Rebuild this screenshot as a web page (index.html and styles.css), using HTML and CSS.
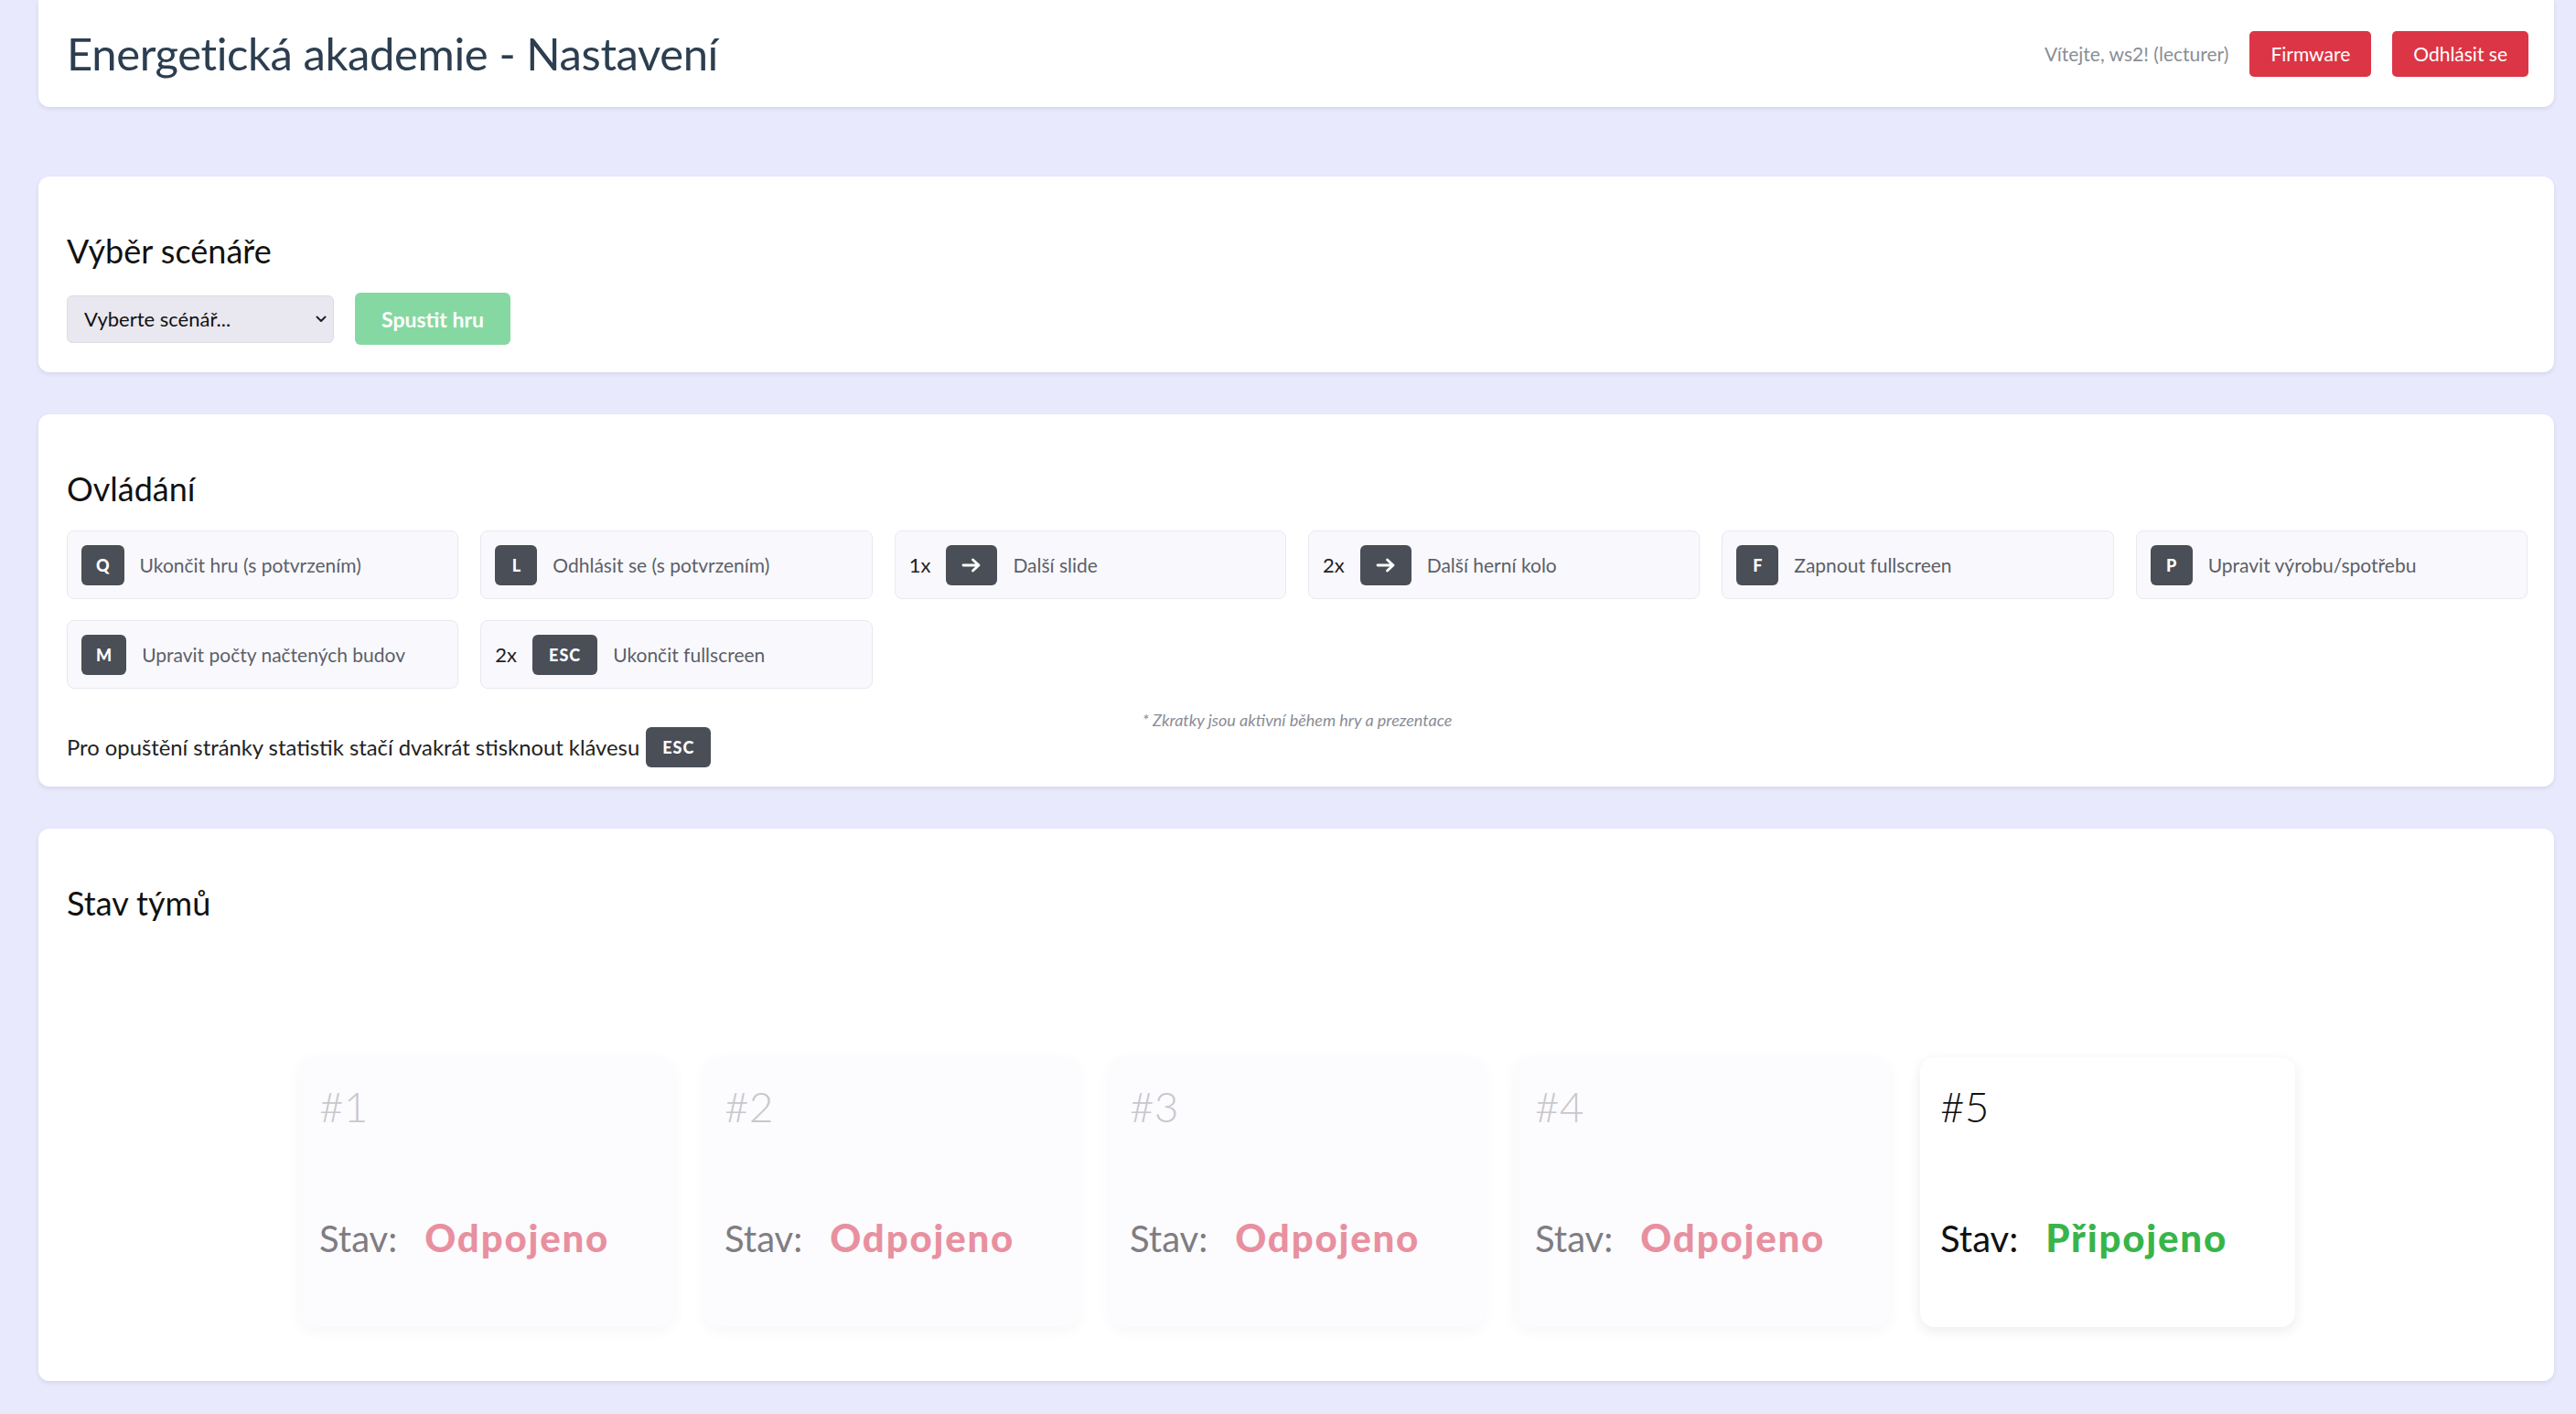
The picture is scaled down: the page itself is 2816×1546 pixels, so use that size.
FILE: index.html
```html
<!DOCTYPE html>
<html lang="cs">
<head>
<meta charset="utf-8">
<title>Energetická akademie - Nastavení</title>
<link rel="stylesheet" href="styles.css">
</head>
<body>
<div class="page">
  <header class="topbar">
    <h1 class="app-title">Energetická akademie - Nastavení</h1>
    <div class="user-box">
      <span class="welcome">Vítejte, ws2! (lecturer)</span>
      <button class="btn btn-danger">Firmware</button>
      <button class="btn btn-danger">Odhlásit se</button>
    </div>
  </header>

  <section class="card">
    <h2 class="card-title">Výběr scénáře</h2>
    <div class="scenario-row">
      <div class="select-wrap">
        <select class="scenario-select">
          <option>Vyberte scénář...</option>
        </select>
        <svg class="select-chevron" width="12" height="8" viewBox="0 0 12 8"><polyline points="1.5,1.5 6,6 10.5,1.5" fill="none" stroke="#222" stroke-width="2" stroke-linecap="round" stroke-linejoin="round"/></svg>
      </div>
      <button class="btn btn-start" disabled>Spustit hru</button>
    </div>
  </section>

  <section class="card card-controls">
    <h2 class="card-title">Ovládání</h2>
    <div class="shortcut-grid">
      <div class="shortcut"><kbd class="key">Q</kbd><span class="desc">Ukončit hru (s potvrzením)</span></div>
      <div class="shortcut"><kbd class="key">L</kbd><span class="desc">Odhlásit se (s potvrzením)</span></div>
      <div class="shortcut"><span class="count">1x</span><kbd class="key key-arrow"><svg width="22" height="16" viewBox="0 0 22 16"><path d="M2 8H19M12.5 2L19 8L12.5 14" fill="none" stroke="#fff" stroke-width="2.8" stroke-linecap="round" stroke-linejoin="round"/></svg></kbd><span class="desc">Další slide</span></div>
      <div class="shortcut"><span class="count">2x</span><kbd class="key key-arrow"><svg width="22" height="16" viewBox="0 0 22 16"><path d="M2 8H19M12.5 2L19 8L12.5 14" fill="none" stroke="#fff" stroke-width="2.8" stroke-linecap="round" stroke-linejoin="round"/></svg></kbd><span class="desc">Další herní kolo</span></div>
      <div class="shortcut"><kbd class="key">F</kbd><span class="desc">Zapnout fullscreen</span></div>
      <div class="shortcut"><kbd class="key">P</kbd><span class="desc">Upravit výrobu/spotřebu</span></div>
      <div class="shortcut"><kbd class="key">M</kbd><span class="desc">Upravit počty načtených budov</span></div>
      <div class="shortcut"><span class="count">2x</span><kbd class="key key-wide">ESC</kbd><span class="desc">Ukončit fullscreen</span></div>
    </div>
    <p class="footnote">* Zkratky jsou aktivní během hry a prezentace</p>
    <p class="exit-hint"><span>Pro opuštění stránky statistik stačí dvakrát stisknout klávesu</span><kbd class="key key-wide">ESC</kbd></p>
  </section>

  <section class="card card-teams">
    <h2 class="card-title">Stav týmů</h2>
    <div class="teams">
      <div class="team offline">
        <div class="team-no">#1</div>
        <div class="team-status"><span class="label">Stav:</span><span class="state">Odpojeno</span></div>
      </div>
      <div class="team offline">
        <div class="team-no">#2</div>
        <div class="team-status"><span class="label">Stav:</span><span class="state">Odpojeno</span></div>
      </div>
      <div class="team offline">
        <div class="team-no">#3</div>
        <div class="team-status"><span class="label">Stav:</span><span class="state">Odpojeno</span></div>
      </div>
      <div class="team offline">
        <div class="team-no">#4</div>
        <div class="team-status"><span class="label">Stav:</span><span class="state">Odpojeno</span></div>
      </div>
      <div class="team online">
        <div class="team-no">#5</div>
        <div class="team-status"><span class="label">Stav:</span><span class="state">Připojeno</span></div>
      </div>
    </div>
  </section>
</div>
</body>
</html>
```

FILE: styles.css
```css
* {
  box-sizing: border-box;
}

html, body {
  margin: 0;
  padding: 0;
}

body {
  background: #e9e9fd;
  font-family: "Lato", "Liberation Sans", sans-serif;
  color: #111;
}

.page {
  width: 2750px;
  margin-left: 42px;
  padding-bottom: 40px;
}

/* top bar */
.topbar {
  height: 117px;
  background: #fff;
  border-radius: 0 0 12px 12px;
  box-shadow: 0 2px 4px rgba(40, 40, 80, 0.10);
  display: flex;
  align-items: center;
  justify-content: space-between;
  padding: 0 28px 0 31px;
  margin-bottom: 76px;
}

.app-title {
  margin: 0;
  font-size: 49px;
  font-weight: 400;
  letter-spacing: -0.4px;
  line-height: 1.2;
  color: #2c3e50;
}

.user-box {
  display: flex;
  align-items: center;
  gap: 23px;
}

.welcome {
  font-size: 21px;
  color: #8a8e95;
}

.btn {
  font-family: inherit;
  border: none;
  cursor: pointer;
}

.btn-danger {
  height: 50px;
  padding: 0 23px;
  border-radius: 5px;
  background: #dc3545;
  color: #fff;
  font-size: 21px;
}

/* cards */
.card {
  background: #fff;
  border-radius: 12px;
  box-shadow: 0 2px 4px rgba(40, 40, 80, 0.10);
  padding: 30px 29px 30px 31px;
  margin-bottom: 46px;
}

.card-title {
  margin: 30px 0 24px;
  font-size: 36px;
  font-weight: 400;
  line-height: 1.2;
  color: #111;
}

/* scenario */
.scenario-row {
  display: flex;
  align-items: center;
  gap: 23px;
}

.select-wrap {
  position: relative;
  width: 292px;
  height: 52px;
}

.scenario-select {
  appearance: none;
  -webkit-appearance: none;
  width: 100%;
  height: 100%;
  padding: 0 30px 0 18px;
  font-family: inherit;
  font-size: 22px;
  color: #111;
  background: #e9e7ef;
  border: 1px solid #dcdae3;
  border-radius: 6px;
}

.select-chevron {
  position: absolute;
  right: 8px;
  top: 22px;
  pointer-events: none;
}

.btn-start {
  height: 57px;
  padding: 0 29px;
  border-radius: 6px;
  background: #86d8a2;
  color: #fff;
  font-size: 23px;
  font-weight: 700;
}

/* controls */
.card-controls {
  padding-bottom: 21px;
}

.shortcut-grid {
  display: grid;
  grid-template-columns: repeat(6, 1fr);
  gap: 23px 24px;
}

.shortcut {
  height: 75px;
  display: flex;
  align-items: center;
  gap: 17px;
  padding: 0 15px;
  background: #f9f9fd;
  border: 1px solid #e8e8f1;
  border-radius: 8px;
}

.key {
  display: inline-flex;
  align-items: center;
  justify-content: center;
  height: 44px;
  min-width: 46px;
  padding: 0 16px;
  border-radius: 6px;
  background: #4a4e57;
  color: #fff;
  font-family: "Lato", sans-serif;
  font-size: 18px;
  font-weight: 900;
}

.key-wide {
  padding: 0 18px;
  letter-spacing: 1px;
}

.key-arrow {
  padding: 0 17px;
}

.desc {
  font-size: 21px;
  color: #5c6068;
}

.count {
  font-size: 22px;
  color: #222;
}

.footnote {
  margin: 26px 0 0;
  text-align: center;
  font-size: 18px;
  line-height: 16px;
  font-style: italic;
  color: #8a8d95;
}

.exit-hint {
  margin: 0;
  display: flex;
  align-items: center;
  gap: 7px;
  font-size: 23.8px;
  color: #222;
}

/* teams */
.teams {
  display: flex;
  justify-content: center;
  gap: 33px;
  padding: 122px 0 29px;
}

.team {
  width: 410px;
  height: 295px;
  padding: 26px 22px 0;
  border-radius: 16px;
}

.team.offline {
  background: #fcfbfe;
  box-shadow: 0 4px 14px rgba(90, 70, 130, 0.05);
}

.team.online {
  background: #fff;
  box-shadow: 0 4px 14px rgba(40, 40, 80, 0.09);
}

.team-no {
  font-size: 46px;
  font-weight: 300;
  line-height: 1.2;
}

.team-status {
  margin-top: 91px;
  display: flex;
  align-items: baseline;
  gap: 30px;
  line-height: 1.2;
}

.label {
  font-size: 40px;
}

.state {
  font-size: 42px;
  font-weight: 900;
  letter-spacing: 1.8px;
}

.offline .team-no { color: #c8c7cc; }
.offline .label { color: #7f7d82; }
.offline .state { color: #e8909f; }

.online .team-no { color: #111; }
.online .label { color: #111; }
.online .state { color: #38b54a; }
```
